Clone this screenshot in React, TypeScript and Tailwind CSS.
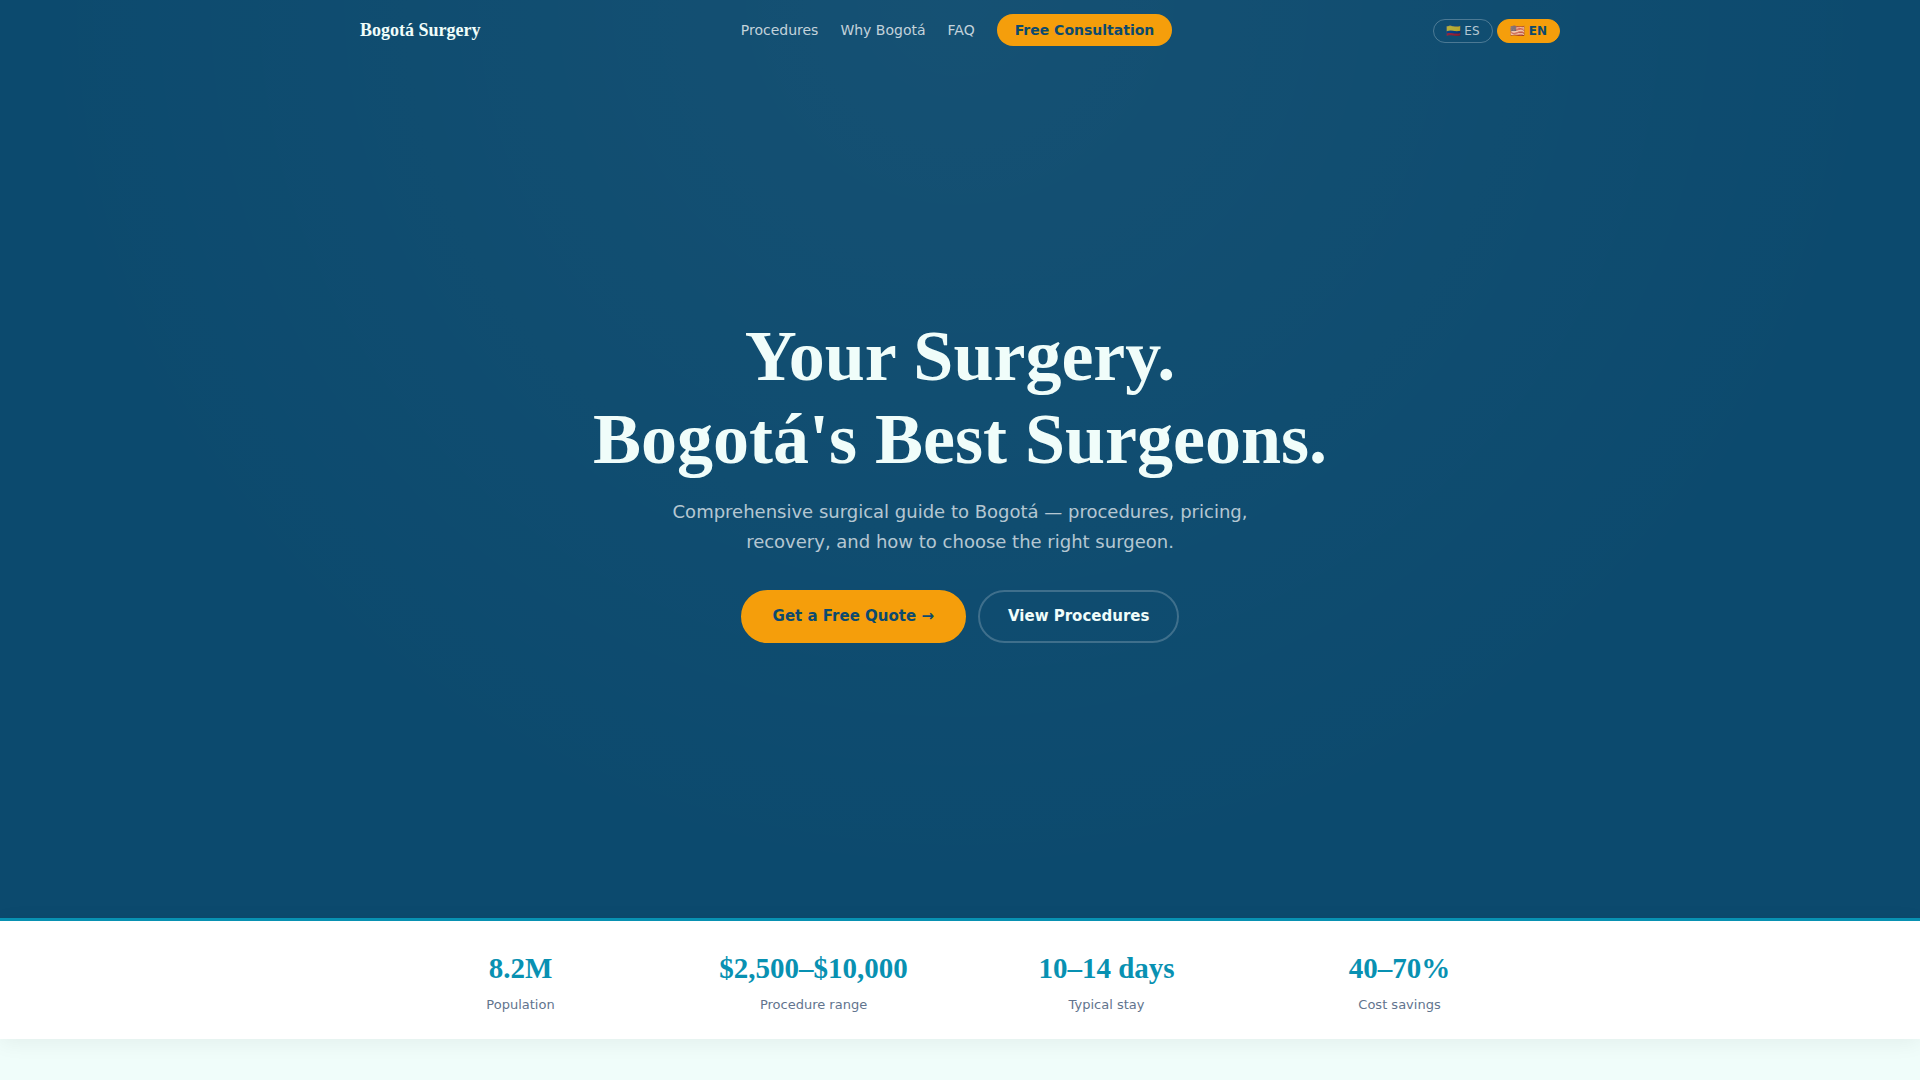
const stats = [
  { value: '8.2M', label: 'Population' },
  { value: '$2,500–$10,000', label: 'Procedure range' },
  { value: '10–14 days', label: 'Typical stay' },
  { value: '40–70%', label: 'Cost savings' },
];

const serif = "font-['Liberation_Serif',serif]";

function Header() {
  return (
    <header className="absolute inset-x-0 top-0 z-10">
      <div className="mx-auto flex min-h-15 max-w-[1200px] items-center justify-between">
        <a href="#top" className={`${serif} text-lg font-bold text-[#f0fdfa]`}>
          Bogotá Surgery
        </a>
        <nav aria-label="Main" className="flex items-center gap-[22px] text-[14px] text-white/75">
          <a href="#procedures">Procedures</a>
          <a href="#why">Why Bogotá</a>
          <a href="#faq">FAQ</a>
          <a
            href="#consultation"
            className="rounded-full bg-[#f59e0b] px-[18px] py-1.5 leading-5 font-bold text-[#0c4a6e]"
          >
            Free Consultation
          </a>
        </nav>
        <div className="flex items-center gap-1 pt-0.5 text-xs leading-[22px]">
          <a
            href="#es"
            lang="es"
            className="rounded-full border border-white/25 px-3 text-white/70"
          >
            🇨🇴 ES
          </a>
          <a
            href="#en"
            lang="en"
            aria-current="true"
            className="rounded-full border border-[#f59e0b] bg-[#f59e0b] px-3 font-bold text-[#0c4a6e]"
          >
            <span className="font-normal opacity-80">🇺🇸</span> EN
          </a>
        </div>
      </div>
    </header>
  );
}

function Hero() {
  return (
    <section
      id="top"
      className="flex min-h-[85vh] flex-col items-center justify-center bg-[#0c4a6e] bg-[radial-gradient(ellipse_at_50%_0%,rgba(255,255,255,0.04)_0%,transparent_70%)] px-6 pt-30 pb-20 text-center"
    >
      <h1 className={`${serif} text-7xl leading-[83px] font-bold text-[#f0fdfa]`}>
        Your Surgery.
        <br />
        Bogotá's Best Surgeons.
      </h1>
      <p className="mt-4 max-w-[600px] text-lg leading-[30px] text-white/70">
        Comprehensive surgical guide to Bogotá — procedures, pricing, recovery, and how to choose
        the right surgeon.
      </p>
      <div className="mt-[33px] flex flex-wrap justify-center gap-3 text-[15px] leading-[25px] font-bold">
        <a
          href="#quote"
          className="rounded-full border-2 border-[#f59e0b] bg-[#f59e0b] px-[30px] py-3 text-[#0c4a6e]"
        >
          Get a Free Quote →
        </a>
        <a
          href="#procedures"
          className="rounded-full border-2 border-white/20 px-7 py-3 text-[#f0fdfa]"
        >
          View Procedures
        </a>
      </div>
    </section>
  );
}

function Stats() {
  return (
    <section className="border-t-3 border-[#0891b2] bg-white py-6 shadow-[0_4px_20px_rgba(0,0,0,0.06)]">
      <dl className="mx-auto grid max-w-[1140px] grid-cols-4 gap-8 text-center">
        {stats.map((s) => (
          <div key={s.label} className="flex flex-col-reverse gap-1">
            <dt className="text-[13px] leading-5 text-slate-500">{s.label}</dt>
            <dd className={`${serif} text-[29px] leading-[46px] font-bold text-[#0891b2]`}>
              {s.value}
            </dd>
          </div>
        ))}
      </dl>
    </section>
  );
}

export default function App() {
  return (
    <div className="relative min-h-screen bg-[#f0fdfa] font-['DejaVu_Sans',sans-serif]">
      <Header />
      <main>
        <Hero />
        <Stats />
      </main>
    </div>
  );
}
